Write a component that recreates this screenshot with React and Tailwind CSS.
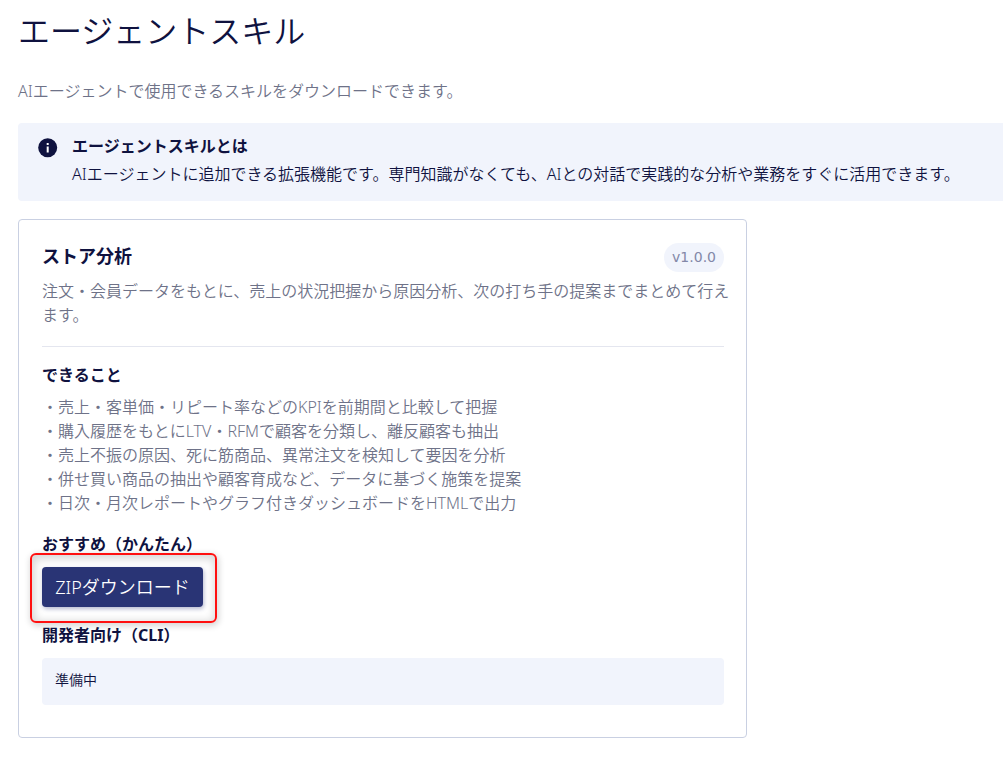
const features = [
  '売上・客単価・リピート率などのKPIを前期間と比較して把握',
  '購入履歴をもとにLTV・RFMで顧客を分類し、離反顧客も抽出',
  '売上不振の原因、死に筋商品、異常注文を検知して要因を分析',
  '併せ買い商品の抽出や顧客育成など、データに基づく施策を提案',
  '日次・月次レポートやグラフ付きダッシュボードをHTMLで出力',
];

function InfoIcon() {
  return (
    <svg className="mt-1.5 size-5 shrink-0" viewBox="0 0 20 20" aria-hidden="true">
      <circle cx="9.7" cy="9.7" r="9.5" fill="#0f123f" />
      <rect x="8.7" y="5" width="2" height="2" fill="#fff" />
      <rect x="8.7" y="8.5" width="2" height="6" fill="#fff" />
    </svg>
  );
}

function InfoBanner() {
  return (
    <section className="mt-5 flex gap-3.5 rounded-l bg-[#f1f4fc] pt-[9px] pb-[13px] pl-5 text-[#0f123f]">
      <InfoIcon />
      <div>
        <h2 className="text-base/7 font-bold">エージェントスキルとは</h2>
        <p className="text-base/7">
          AIエージェントに追加できる拡張機能です。専門知識がなくても、AIとの対話で実践的な分析や業務をすぐに活用できます。
        </p>
      </div>
    </section>
  );
}

function SkillCard() {
  return (
    <article className="mt-[18px] max-w-[729px] rounded border border-[#c9d0e2] bg-white pt-[23px] pr-[22px] pb-8 pl-[23px]">
      <div className="flex items-start justify-between">
        <h2 className="text-lg/[26px] font-bold">ストア分析</h2>
        <span className="h-[29px] rounded-full bg-[#f1f4fc] px-2 font-['DejaVu_Sans',sans-serif] text-sm/7 font-normal text-[#8388a8]">
          v1.0.0
        </span>
      </div>
      <div className="mt-[7px] border-b border-[#e4e6ef] pb-[19px]">
        <p className="-mr-2 text-base/6 text-[#6e7288]">
          注文・会員データをもとに、売上の状況把握から原因分析、次の打ち手の提案までまとめて行えます。
        </p>
      </div>

      <h3 className="mt-4 text-base/6 font-bold">できること</h3>
      <ul className="mt-2 text-base/6 text-[#6e7288]">
        {features.map((text) => (
          <li key={text}>・{text}</li>
        ))}
      </ul>

      <h3 className="mt-[17px] text-base/6 font-bold">おすすめ（かんたん）</h3>
      <div className="-mt-[3px] -ml-3 w-[187px] rounded-md border-2 border-[#ff1010] px-2.5 pt-3 pb-3.5 shadow-[1px_2px_6px_1px_rgba(0,0,0,0.16),inset_1px_2px_8px_2px_rgba(0,0,0,0.16)]">
        <button
          type="button"
          className="h-10 w-[161px] rounded bg-[#293475] text-lg text-white shadow-[1px_2px_4px_rgba(41,52,117,0.35)]"
        >
          ZIPダウンロード
        </button>
      </div>
      <h3 className="text-base/6 font-bold">開発者向け（CLI）</h3>
      <p className="mt-[11px] rounded bg-[#f1f4fc] px-[13px] pt-2.5 pb-[13px] text-sm/6">準備中</p>
    </article>
  );
}

export default function App() {
  return (
    <main className="bg-white pl-[18px] font-['Noto_Sans','Noto_Sans_CJK_JP',sans-serif] font-[350] text-[#0f123f]">
      <h1 className="pt-[7px] text-[32px]/[48px]">エージェントスキル</h1>
      <p className="mt-6 text-base/6 text-[#6e7288]">AIエージェントで使用できるスキルをダウンロードできます。</p>
      <InfoBanner />
      <SkillCard />
    </main>
  );
}
